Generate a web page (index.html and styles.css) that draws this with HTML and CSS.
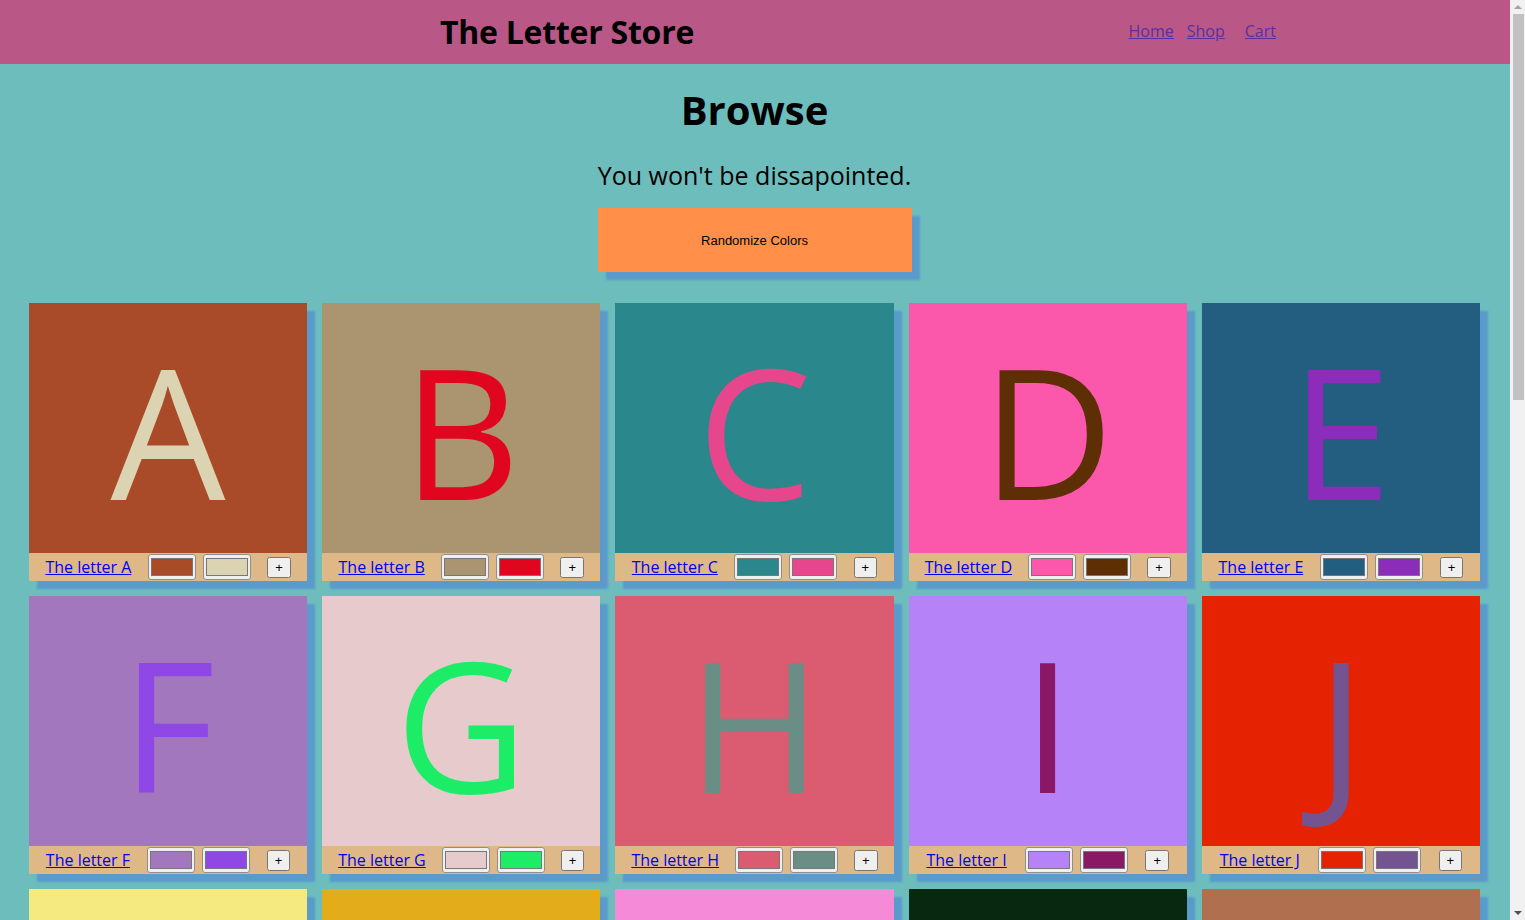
FILE: index.html
```html
<!DOCTYPE html>
<html lang="en">
<head>
<meta charset="utf-8">
<title>The Letter Store</title>
<link rel="stylesheet" href="styles.css">
</head>
<body>
<div class="viewport">
<header class="site-header">
  <h1 class="brand">The Letter Store</h1>
  <nav class="nav">
    <a href="#" class="nav-home">Home</a>
    <a href="#" class="nav-shop">Shop</a>
    <a href="#" class="nav-cart">Cart</a>
  </nav>
</header>
<main class="page">
  <section class="intro">
    <h2 class="intro-title">Browse</h2>
    <p class="intro-text">You won't be dissapointed.</p>
    <button class="randomize">Randomize Colors</button>
  </section>
  <div class="grid">
    <div class="card"><div class="card-face" style="background:#a94a29;color:#dcd3b2">A</div><div class="card-bar"><a href="#">The letter A</a><span class="swatches"><input type="color" value="#a94a29"><input type="color" value="#dcd3b2"></span><button class="add">+</button></div></div>
    <div class="card"><div class="card-face" style="background:#ab9470;color:#e00620">B</div><div class="card-bar"><a href="#">The letter B</a><span class="swatches"><input type="color" value="#ab9470"><input type="color" value="#e00620"></span><button class="add">+</button></div></div>
    <div class="card"><div class="card-face" style="background:#2a878b;color:#e6478c">C</div><div class="card-bar"><a href="#">The letter C</a><span class="swatches"><input type="color" value="#2a878b"><input type="color" value="#e6478c"></span><button class="add">+</button></div></div>
    <div class="card"><div class="card-face" style="background:#fb58ab;color:#5e2e05">D</div><div class="card-bar"><a href="#">The letter D</a><span class="swatches"><input type="color" value="#fb58ab"><input type="color" value="#5e2e05"></span><button class="add">+</button></div></div>
    <div class="card"><div class="card-face" style="background:#235d7f;color:#8b2cba">E</div><div class="card-bar"><a href="#">The letter E</a><span class="swatches"><input type="color" value="#235d7f"><input type="color" value="#8b2cba"></span><button class="add">+</button></div></div>
    <div class="card"><div class="card-face" style="background:#a277bd;color:#8f47e6">F</div><div class="card-bar"><a href="#">The letter F</a><span class="swatches"><input type="color" value="#a277bd"><input type="color" value="#8f47e6"></span><button class="add">+</button></div></div>
    <div class="card"><div class="card-face" style="background:#e7cbcc;color:#1ded66">G</div><div class="card-bar"><a href="#">The letter G</a><span class="swatches"><input type="color" value="#e7cbcc"><input type="color" value="#1ded66"></span><button class="add">+</button></div></div>
    <div class="card"><div class="card-face" style="background:#db5c71;color:#6a8d86">H</div><div class="card-bar"><a href="#">The letter H</a><span class="swatches"><input type="color" value="#db5c71"><input type="color" value="#6a8d86"></span><button class="add">+</button></div></div>
    <div class="card"><div class="card-face" style="background:#b583f7;color:#8a1865">I</div><div class="card-bar"><a href="#">The letter I</a><span class="swatches"><input type="color" value="#b583f7"><input type="color" value="#8a1865"></span><button class="add">+</button></div></div>
    <div class="card"><div class="card-face" style="background:#e52201;color:#745490">J</div><div class="card-bar"><a href="#">The letter J</a><span class="swatches"><input type="color" value="#e52201"><input type="color" value="#745490"></span><button class="add">+</button></div></div>
    <div class="card"><div class="card-face" style="background:#f5ea80;color:#3a5fd0">K</div><div class="card-bar"><a href="#">The letter K</a><span class="swatches"><input type="color" value="#f5ea80"><input type="color" value="#3a5fd0"></span><button class="add">+</button></div></div>
    <div class="card"><div class="card-face" style="background:#e2ac1b;color:#2d1c6e">L</div><div class="card-bar"><a href="#">The letter L</a><span class="swatches"><input type="color" value="#e2ac1b"><input type="color" value="#2d1c6e"></span><button class="add">+</button></div></div>
    <div class="card"><div class="card-face" style="background:#f48ad8;color:#1f6b3a">M</div><div class="card-bar"><a href="#">The letter M</a><span class="swatches"><input type="color" value="#f48ad8"><input type="color" value="#1f6b3a"></span><button class="add">+</button></div></div>
    <div class="card"><div class="card-face" style="background:#08280f;color:#d8e96a">N</div><div class="card-bar"><a href="#">The letter N</a><span class="swatches"><input type="color" value="#08280f"><input type="color" value="#d8e96a"></span><button class="add">+</button></div></div>
    <div class="card"><div class="card-face" style="background:#b07050;color:#c9f2ee">O</div><div class="card-bar"><a href="#">The letter O</a><span class="swatches"><input type="color" value="#b07050"><input type="color" value="#c9f2ee"></span><button class="add">+</button></div></div>
  </div>
</main>
</div>
<div class="scrollbar" aria-hidden="true">
  <span class="sb-arrow sb-up"></span>
  <span class="sb-thumb"></span>
  <span class="sb-spacer"></span>
  <span class="sb-arrow sb-down"></span>
</div>
</body>
</html>
```
FILE: styles.css
```css
html, body {
  margin: 0;
  padding: 0;
}
body {
  height: 100vh;
  overflow: hidden;
  display: flex;
  background: #6dbdbd;
  font-family: "Open Sans", "Noto Sans", sans-serif;
  color: #000;
}
.viewport {
  flex: 1;
  min-width: 0;
  overflow: hidden;
}
.scrollbar {
  width: 15px;
  flex: none;
  background: #f1f1f1;
  display: flex;
  flex-direction: column;
  align-items: center;
}
.sb-arrow {
  width: 0;
  height: 0;
  border-left: 4px solid transparent;
  border-right: 4px solid transparent;
}
.sb-up {
  margin: 5px 0 5px;
  border-bottom: 4px solid #a3a3a3;
}
.sb-down {
  margin: 5px 0 5px;
  border-top: 4px solid #505050;
}
.sb-thumb {
  width: 11px;
  height: 386px;
  background: #c1c1c1;
  margin-left: 1px;
}
.sb-spacer {
  flex: 1;
}
.site-header {
  background: #b95887;
  height: 64px;
  display: flex;
  align-items: center;
  padding: 0 234px 0 440px;
}
.brand {
  margin: 0 0 2px;
  font-size: 32px;
  font-weight: 700;
  letter-spacing: -0.25px;
}
.nav {
  margin-left: auto;
  margin-bottom: 2px;
  display: flex;
  gap: 13px;
  font-size: 16px;
}
.nav a {
  color: #5a2fa3;
}
.nav .nav-cart {
  margin-left: 7px;
}
.page {
  padding: 0 30px 40px 29px;
}
.intro {
  display: flex;
  flex-direction: column;
  align-items: center;
}
.intro-title {
  margin: 20px 0 0;
  font-size: 40px;
  font-weight: 700;
  line-height: 52px;
}
.intro-text {
  margin: 22px 0 0;
  font-size: 25px;
  line-height: 34px;
}
.randomize {
  margin-top: 16px;
  width: 314px;
  height: 64px;
  border: none;
  background: #ff8f49;
  font-family: "Liberation Sans", Arial, sans-serif;
  font-size: 13px;
  color: #000;
  box-shadow: 8px 8px 2px #5b9bcb;
}
.grid {
  margin-top: 31px;
  display: grid;
  grid-template-columns: repeat(5, 1fr);
  gap: 15px;
}
.card {
  box-shadow: 8px 8px 2px #5b9bcb;
}
.card-face {
  height: 250px;
  display: flex;
  align-items: center;
  justify-content: center;
  font-size: 182px;
  line-height: 1;
  padding-top: 2px;
  box-sizing: border-box;
}
.card-bar {
  height: 28px;
  background: #dfb887;
  display: flex;
  align-items: center;
  justify-content: space-evenly;
  font-size: 16px;
}
.card-bar a {
  color: #0000ee;
}
.swatches {
  display: flex;
  gap: 7px;
}
.swatches input {
  width: 48px;
  height: 26px;
  margin: 0;
  padding: 3px 2px;
  box-sizing: border-box;
  background: #efefef;
  border: 1px solid #8f8f8f;
  border-radius: 3px;
}
.swatches input::-webkit-color-swatch-wrapper {
  padding: 0;
}
.swatches input::-webkit-color-swatch {
  border: 1px solid #777;
}
.add {
  font-size: 13px;
  padding: 1px 6px;
}
```
